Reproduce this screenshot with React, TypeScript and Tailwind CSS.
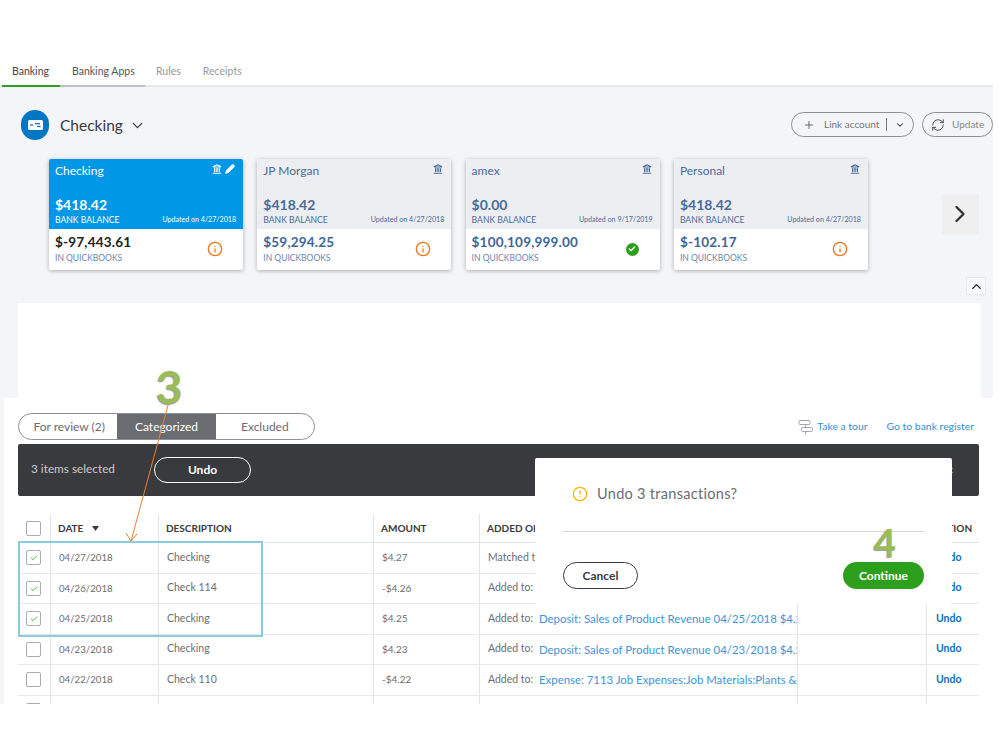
import { Check, ChevronDown, ChevronRight, ChevronUp, Info, Landmark, Pencil, Plus, RefreshCw, CircleAlert } from 'lucide-react'

const cards = [
  { name: 'Checking', bank: '$418.42', updated: '4/27/2018', books: '$-97,443.61', ok: false, active: true },
  { name: 'JP Morgan', bank: '$418.42', updated: '4/27/2018', books: '$59,294.25', ok: false, active: false },
  { name: 'amex', bank: '$0.00', updated: '9/17/2019', books: '$100,109,999.00', ok: true, active: false },
  { name: 'Personal', bank: '$418.42', updated: '4/27/2018', books: '$-102.17', ok: false, active: false },
]

const rows = [
  { date: '04/27/2018', desc: 'Checking', amount: '$4.27', label: 'Matched to:', link: 'Deposit: Sales of Product Revenue 04/27/2018 $4.27', checked: true },
  { date: '04/26/2018', desc: 'Check 114', amount: '-$4.26', label: 'Added to:', link: 'Expense: 7113 Job Expenses:Job Materials:Plants & Soil', checked: true },
  { date: '04/25/2018', desc: 'Checking', amount: '$4.25', label: 'Added to:', link: 'Deposit: Sales of Product Revenue 04/25/2018 $4.25', checked: true },
  { date: '04/23/2018', desc: 'Checking', amount: '$4.23', label: 'Added to:', link: 'Deposit: Sales of Product Revenue 04/23/2018 $4.23', checked: false },
  { date: '04/22/2018', desc: 'Check 110', amount: '-$4.22', label: 'Added to:', link: 'Expense: 7113 Job Expenses:Job Materials:Plants & Soil', checked: false },
  { date: '04/21/2018', desc: 'Checking', amount: '$4.21', label: 'Added to:', link: 'Deposit: Sales of Product Revenue 04/21/2018 $4.21', checked: false },
]

const gridCols = 'grid grid-cols-[32px_108px_215px_106px_318px_129px_53px]'
const cellLine = 'border-l border-[#dfe4ee]'

function AccountCard({ card }: { card: (typeof cards)[number] }) {
  const top = card.active ? 'bg-[#0097e6] text-white' : 'bg-[#eceef1] text-[#4a6c9b]'
  return (
    <div className="h-[111px] w-[194px] shrink-0 overflow-hidden rounded-[2px] bg-white shadow-[0_1px_4px_rgba(0,0,0,0.3)]">
      <div className={`relative h-[70px] px-[6px] ${top}`}>
        <div className="flex items-start justify-between pt-[5px] text-[12px] leading-[14px]">
          <span>{card.name}</span>
          <span className="flex gap-[3px] pr-[2px]">
            <Landmark size={10} strokeWidth={2.5} />
            {card.active && <Pencil size={10} strokeWidth={2.5} fill="white" />}
          </span>
        </div>
        <div className="mt-[19px] text-[14px] font-bold leading-[16px]">{card.bank}</div>
        <div className="mt-[1px] flex items-center justify-between pr-[1px] text-[8.6px] leading-[12px]">
          <span>BANK BALANCE</span>
          <span className="text-[7.1px]">Updated on {card.updated}</span>
        </div>
      </div>
      <div className="flex h-[41px] items-center justify-between pb-[1px] pl-[6px] pr-[20px]">
        <div>
          <div className={`text-[13.5px] font-bold leading-[16px] tracking-[0.2px] ${card.active ? 'text-[#222]' : 'text-[#3f6598]'}`}>{card.books}</div>
          <div className="mt-[2px] text-[8.5px] leading-[12px] text-[#6b86ad]">IN QUICKBOOKS</div>
        </div>
        {card.ok ? (
          <span className="mr-[1px] flex h-[13px] w-[13px] items-center justify-center rounded-full bg-[#2ca01c]">
            <Check size={8} strokeWidth={4} className="text-white" />
          </span>
        ) : (
          <Info size={16} strokeWidth={2} className="text-[#f5751f]" />
        )}
      </div>
    </div>
  )
}

function Box({ checked }: { checked: boolean }) {
  return (
    <span className="flex h-[15px] w-[15px] items-center justify-center rounded-[2px] border-[1.5px] border-[#a8abb0] bg-white">
      {checked && <Check size={8} strokeWidth={2.5} className="mt-[1px] text-[#2ca01c]" />}
    </span>
  )
}

export default function App() {
  return (
    <div className="relative h-[749px] w-[999px] overflow-hidden bg-white font-['Lato','Noto_Sans',sans-serif]">
      <div className="h-[60px]" />
      {/* tabs */}
      <div className="flex h-[27px] w-[993px] border-b-2 border-[#e6e8ec] pl-[2px] text-[10.5px]">
        <div className="-mb-[2px] w-[58px] border-b-2 border-[#2ca01c] pl-[10px] pt-[4px] text-[#444]">Banking</div>
        <div className="-mb-[2px] w-[85px] border-b-2 border-[#babec5] pl-[12px] pt-[4px] text-[#555]">Banking Apps</div>
        <div className="pl-[11px] pt-[4px] text-[#999]">Rules</div>
        <div className="pl-[22px] pt-[4px] text-[#999]">Receipts</div>
      </div>

      <div className="h-[617px] w-[993px] bg-[#f4f5f9]">
        {/* account header */}
        <div className="flex h-[72px] items-start pl-[21px] pt-[23px]">
          <span className="flex h-[30px] w-[28px] items-center justify-center rounded-full bg-[#0077c5]">
            <svg width="15" height="10" viewBox="0 0 15 10">
              <rect width="15" height="10" rx="1.5" fill="white" />
              <rect x="7" y="3" width="5" height="1.3" fill="#0077c5" />
              <rect x="9" y="5.8" width="3.5" height="1.3" fill="#0077c5" />
              <rect x="2" y="4.4" width="3" height="1.3" fill="#0077c5" />
            </svg>
          </span>
          <span className="ml-[11px] pt-[3px] text-[15.5px] leading-[24px] text-[#393a3d]">Checking</span>
          <ChevronDown size={17} strokeWidth={1.8} className="ml-[6px] mt-[7px] text-[#393a3d]" />
          <div className="ml-auto mt-[2px] flex gap-[8px]">
            <div className="flex h-[25px] w-[123px] items-center rounded-full border-[1.5px] border-[#8d9096] pl-[11px] text-[10px] text-[#777]">
              <Plus size={12} strokeWidth={1.6} className="text-[#444]" />
              <span className="ml-[9px]">Link account</span>
              <span className="ml-[7px] h-[13px] border-l border-[#777]" />
              <ChevronDown size={10} strokeWidth={2.5} className="ml-[8px] text-[#333]" />
            </div>
            <div className="flex h-[25px] w-[71px] items-center rounded-full border-[1.5px] border-[#8d9096] pl-[8px] text-[10px] text-[#888]">
              <RefreshCw size={14} strokeWidth={1.6} className="text-[#444]" />
              <span className="ml-[7px]">Update</span>
            </div>
          </div>
        </div>

        {/* account cards */}
        <div className="flex items-start pl-[49px]">
          <div className="flex gap-[14.3px]">
            {cards.map((card) => (
              <AccountCard key={card.name} card={card} />
            ))}
          </div>
          <div className="ml-[74px] mt-[35px] flex h-[40px] w-[37px] items-center justify-center bg-[#efefef]">
            <ChevronRight size={28} strokeWidth={2} className="text-[#333]" />
          </div>
        </div>

        <div className="flex h-[33px] justify-end pr-[7px] pt-[7px]">
          <div className="flex h-[18px] w-[20px] items-center justify-center border border-[#e6e8ec] bg-[#f8f9fb]">
            <ChevronUp size={15} strokeWidth={2.2} className="text-[#222]" />
          </div>
        </div>

        <div className="ml-[18px] h-[95px] w-[963px] bg-white" />

        {/* transactions panel */}
        <div className="ml-[4px] h-[306px] overflow-hidden bg-white pl-[14px] pr-[14px]">
          <div className="flex h-[46px] items-start justify-between pt-[15px]">
            <div className="flex h-[27px] w-[297px] overflow-hidden rounded-full border-[1.5px] border-[#8d9096] text-[12px]">
              <div className="flex w-[99px] items-center justify-center pl-[2px] text-[#6b6c72]">For review (2)</div>
              <div className="flex w-[99px] items-center justify-center bg-[#6b6c72] text-white">Categorized</div>
              <div className="flex w-[99px] items-center justify-center text-[#6b6c72]">Excluded</div>
            </div>
            <div className="flex items-center pr-[5px] pt-[6px] text-[10.4px] text-[#2f8fd6]">
              <svg width="16" height="16" viewBox="0 0 16 16" fill="none" stroke="#a3a5aa" strokeWidth="1">
                <rect x="1" y="1.5" width="11" height="4" rx="1" />
                <rect x="3.5" y="8.5" width="11" height="4" rx="1" />
                <path d="M7.5 5.5v3M7.5 12.5v3" />
              </svg>
              <span className="ml-[3px]">Take a tour</span>
              <span className="ml-[19px]">Go to bank register</span>
            </div>
          </div>

          <div className="flex h-[52px] items-center justify-between rounded-[2px] bg-[#393a3d] pb-[1px] pl-[13px] pr-[25px]">
            <div className="flex items-center">
              <span className="w-[123px] pb-[1px] text-[11.8px] text-[#c9cacc]">3 items selected</span>
              <span className="flex h-[26px] w-[97px] items-center justify-center rounded-full border-[1.5px] border-white text-[12px] font-bold text-white">Undo</span>
            </div>
            <span className="text-[14px] text-[#8d9096]">×</span>
          </div>

          <div className={`${gridCols} mt-[18px] h-[29px] w-[961px] items-center border-b border-[#dfe4ee] text-[10px] font-bold text-[#393a3d]`}>
            <div className="flex h-full items-center pl-[8px]">
              <Box checked={false} />
            </div>
            <div className={`flex h-full items-center pl-[7px] ${cellLine}`}>
              DATE
              <svg width="7" height="5" viewBox="0 0 7 5" className="ml-[9px]">
                <path d="M0 0h7L3.5 5z" fill="#393a3d" />
              </svg>
            </div>
            <div className={`flex h-full items-center pl-[7px] ${cellLine}`}>DESCRIPTION</div>
            <div className={`flex h-full items-center pl-[7px] ${cellLine}`}>AMOUNT</div>
            <div className={`flex h-full items-center pl-[7px] ${cellLine}`}>ADDED OR MATCHED</div>
            <div className={`flex h-full items-center pl-[7px] ${cellLine}`}>RULE</div>
            <div className={`flex h-full items-center pl-[7px] ${cellLine}`}>ACTION</div>
          </div>

          {rows.map((row) => (
            <div key={row.date} className={`${gridCols} h-[30.5px] w-[961px] items-center border-b border-[#e6e8ec] text-[10px] text-[#6b6c72]`}>
              <div className="flex h-full items-center pl-[8px]">
                <Box checked={row.checked} />
              </div>
              <div className={`flex h-full items-center pl-[8px] text-[9.7px] ${cellLine}`}>{row.date}</div>
              <div className={`flex h-full items-center pl-[8px] text-[10.5px] ${cellLine}`}>{row.desc}</div>
              <div className={`flex h-full items-center pl-[8px] ${cellLine}`}>{row.amount}</div>
              <div className={`flex h-full items-center overflow-hidden whitespace-nowrap pl-[8px] ${cellLine}`}>
                <span className="w-[51px] shrink-0 text-[10.5px]">{row.label}</span>
                <span className="text-[11.4px] text-[#3d94d8]">{row.link}</span>
              </div>
              <div className={`h-full ${cellLine}`} />
              <div className={`flex h-full items-center pl-[9px] text-[10.5px] font-bold text-[#0a6fc2] ${cellLine}`}>Undo</div>
            </div>
          ))}
        </div>
      </div>

      {/* confirm dialog */}
      <div className="absolute left-[535px] top-[458px] h-[146px] w-[417px] rounded-[2px] bg-white px-[28px]">
        <div className="flex items-center pt-[27px] text-[14.5px] leading-[18px] text-[#6b6c72]">
          <CircleAlert size={16} strokeWidth={1.8} className="ml-[9px] text-[#ffb300]" />
          <span className="ml-[9px] tracking-[0.3px]">Undo 3 transactions?</span>
        </div>
        <div className="mt-[28px] border-t border-[#d4d7dc]" />
        <div className="mt-[30px] flex justify-between">
          <span className="flex h-[27px] w-[75px] items-center justify-center rounded-full border-[1.5px] border-[#393a3d] text-[12px] font-bold text-[#393a3d]">Cancel</span>
          <span className="flex h-[27px] w-[81px] items-center justify-center rounded-full bg-[#2ca01c] text-[12px] font-bold text-white">Continue</span>
        </div>
      </div>

      {/* annotations */}
      <svg className="absolute left-[125px] top-[395px]" width="50" height="150" viewBox="0 0 50 150">
        <path d="M45 3 L6 146 M1 138 L6 146 L12 139" fill="none" stroke="#ed7d31" strokeWidth="1" />
      </svg>
      <span className="absolute left-[156px] top-[358px] text-[46px] font-bold leading-[58px] text-[#9bbb59] [text-shadow:-1px_1px_1px_#999]">3</span>
      <span className="absolute left-[874px] top-[514px] text-[38px] font-bold leading-[56px] text-[#9bbb59] [text-shadow:-1px_1px_1px_#999]">4</span>
      <div className="absolute left-[18px] top-[541px] h-[96px] w-[245px] border-2 border-[#8ccbdf]" />
    </div>
  )
}
